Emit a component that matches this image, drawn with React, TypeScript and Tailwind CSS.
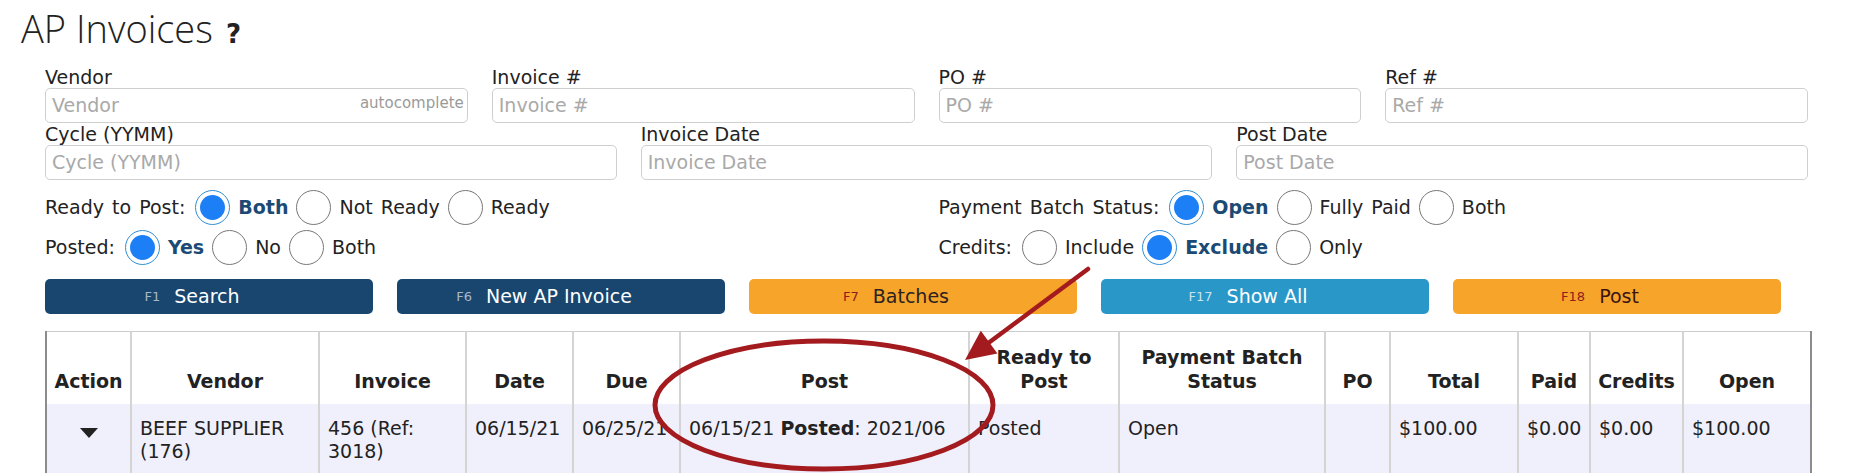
import React from 'react';

// Simple radio look-alike (large native style)
function Radio({ checked }: { checked?: boolean }) {
  if (checked) {
    return (
      <span className="flex h-[35px] w-[35px] shrink-0 items-center justify-center rounded-full border-[1.5px] border-[#2f8ed3] bg-white">
        <span className="h-[25px] w-[25px] rounded-full bg-[#1c7ff6]" />
      </span>
    );
  }
  return <span className="h-[35px] w-[35px] shrink-0 rounded-full border-[1.5px] border-[#7a7676] bg-white" />;
}

function RadioGroup({ label, options, selected }: { label: string; options: string[]; selected: number }) {
  return (
    <div className="flex h-[35px] items-center gap-2 [word-spacing:2px]">
      <span className="mr-[2px]">{label}</span>
      {options.map((opt, i) => (
        <React.Fragment key={opt}>
          <Radio checked={i === selected} />
          <span className={i === selected ? 'font-bold text-[#1b4a75]' : ''}>{opt}</span>
        </React.Fragment>
      ))}
    </div>
  );
}

function Field({ label, children }: { label: string; children?: React.ReactNode }) {
  return (
    <div className="flex flex-col">
      <span className="leading-[22px]">{label}</span>
      {children}
    </div>
  );
}

function TextBox({ placeholder, hint }: { placeholder: string; hint?: string }) {
  return (
    <div className="flex h-[35px] items-center justify-between rounded-[5px] border border-[#cfcfcf] bg-white pl-[6px] pr-[3px]">
      <span className="text-[#a9a9a9]">{placeholder}</span>
      {hint && <span className="-mt-[4px] text-[15px] text-[#9a9a9a]">{hint}</span>}
    </div>
  );
}

const buttons = [
  { key: 'F1', label: 'Search', cls: 'bg-[#18466f] text-white', keyCls: 'text-[#a9b8c8]' },
  { key: 'F6', label: 'New AP Invoice', cls: 'bg-[#18466f] text-white', keyCls: 'text-[#a9b8c8]' },
  { key: 'F7', label: 'Batches', cls: 'bg-[#f6a42a] text-[#2a2222]', keyCls: 'text-[#8e1d1d]' },
  { key: 'F17', label: 'Show All', cls: 'bg-[#2997c8] text-white', keyCls: 'text-[#c9e3f0]' },
  { key: 'F18', label: 'Post', cls: 'bg-[#f6a42a] text-[#3a1414]', keyCls: 'text-[#8e1d1d]' },
];

const columns = [
  { title: 'Action', w: 'w-[85px]' },
  { title: 'Vendor', w: 'w-[188px]' },
  { title: 'Invoice', w: 'w-[147px]' },
  { title: 'Date', w: 'w-[107px]' },
  { title: 'Due', w: 'w-[107px]' },
  { title: 'Post', w: 'w-[289px]' },
  { title: 'Ready to Post', w: 'w-[150px]' },
  { title: 'Payment Batch Status', w: 'w-[206px]' },
  { title: 'PO', w: 'w-[65px]' },
  { title: 'Total', w: 'w-[128px]' },
  { title: 'Paid', w: 'w-[72px]' },
  { title: 'Credits', w: 'w-[93px]' },
  { title: 'Open', w: 'w-[128px]' },
];

export default function App() {
  return (
    <div className="relative h-[473px] w-[1857px] overflow-hidden bg-white font-[family-name:'DejaVu_Sans',Verdana,sans-serif] text-[19px] text-[#222]">
      {/* Title */}
      <h1 className="ml-[21px] mt-[2px] h-[52px] leading-[52px] whitespace-nowrap">
        <span className="font-[family-name:'Open_Sans',sans-serif] text-[38px] font-light text-[#222]">AP Invoices</span>
        <span className="ml-[13px] text-[26px] font-bold">?</span>
      </h1>

      <div className="ml-[45px] w-[1763px]">
        {/* Filters */}
        <div className="mt-[12px] grid grid-cols-4 gap-x-6">
          <Field label="Vendor">
            <TextBox placeholder="Vendor" hint="autocomplete" />
          </Field>
          <Field label="Invoice #">
            <TextBox placeholder="Invoice #" />
          </Field>
          <Field label="PO #">
            <TextBox placeholder="PO #" />
          </Field>
          <Field label="Ref #">
            <TextBox placeholder="Ref #" />
          </Field>
        </div>
        <div className="grid grid-cols-3 gap-x-6">
          <Field label="Cycle (YYMM)">
            <TextBox placeholder="Cycle (YYMM)" />
          </Field>
          <Field label="Invoice Date">
            <TextBox placeholder="Invoice Date" />
          </Field>
          <Field label="Post Date">
            <TextBox placeholder="Post Date" />
          </Field>
        </div>

        <div className="mt-[10px] grid grid-cols-2 gap-x-6 gap-y-[5px]">
          <RadioGroup label="Ready to Post:" options={['Both', 'Not Ready', 'Ready']} selected={0} />
          <RadioGroup label="Payment Batch Status:" options={['Open', 'Fully Paid', 'Both']} selected={0} />
          <RadioGroup label="Posted:" options={['Yes', 'No', 'Both']} selected={0} />
          <RadioGroup label="Credits:" options={['Include', 'Exclude', 'Only']} selected={1} />
        </div>

        {/* Action buttons */}
        <div className="mt-[14px] grid grid-cols-[repeat(5,328px)] gap-x-6">
          {buttons.map(b => (
            <button key={b.key} className={`flex h-[35px] items-center justify-center gap-[14px] rounded-[5px] pr-[34px] ${b.cls}`}>
              <span className={`text-[13px] ${b.keyCls}`}>{b.key}</span>
              <span>{b.label}</span>
            </button>
          ))}
        </div>

        {/* Results */}
        <table className="mt-[17px] w-[1765px] table-fixed border-collapse border-t border-l-2 border-r-2 border-t-[#cccccc] border-l-[#8c8c8c] border-r-[#8c8c8c]">
          <colgroup>
            {columns.map(c => (
              <col key={c.title} className={c.w} />
            ))}
          </colgroup>
          <thead>
            <tr className="h-[72px]">
              {columns.map(c => (
                <th key={c.title} className="border-r-2 border-[#d6d3d3] px-1 pb-[11px] text-center align-bottom font-bold leading-[24px] last:border-r-0">
                  {c.title}
                </th>
              ))}
            </tr>
          </thead>
          <tbody>
            <tr className="bg-[#f0f0fc] align-top leading-[23px]">
              <td className="border-r-2 border-[#d6d3d3] pt-[24px]">
                <div className="mx-auto h-0 w-0 border-x-[9px] border-t-[10px] border-x-transparent border-t-[#222]" />
              </td>
              <td className="border-r-2 border-[#d6d3d3] px-2 pt-[13px] pb-[20px]">BEEF SUPPLIER (176)</td>
              <td className="border-r-2 border-[#d6d3d3] px-2 pt-[13px]">456 (Ref: 3018)</td>
              <td className="border-r-2 border-[#d6d3d3] px-2 pt-[13px]">06/15/21</td>
              <td className="border-r-2 border-[#d6d3d3] px-2 pt-[13px] whitespace-nowrap">06/25/21</td>
              <td className="border-r-2 border-[#d6d3d3] px-2 pt-[13px] whitespace-nowrap">
                06/15/21 <b>Posted</b>: 2021/06
              </td>
              <td className="border-r-2 border-[#d6d3d3] px-2 pt-[13px]">Posted</td>
              <td className="border-r-2 border-[#d6d3d3] px-2 pt-[13px]">Open</td>
              <td className="border-r-2 border-[#d6d3d3] px-2 pt-[13px]"></td>
              <td className="border-r-2 border-[#d6d3d3] px-2 pt-[13px]">$100.00</td>
              <td className="border-r-2 border-[#d6d3d3] px-2 pt-[13px]">$0.00</td>
              <td className="border-r-2 border-[#d6d3d3] px-2 pt-[13px]">$0.00</td>
              <td className="px-2 pt-[13px]">$100.00</td>
            </tr>
          </tbody>
        </table>
      </div>

      {/* Red annotation drawn over the page */}
      <svg className="pointer-events-none absolute left-0 top-0" width="1857" height="473" viewBox="0 0 1857 473">
        <ellipse cx="824" cy="405" rx="169" ry="64" fill="none" stroke="#a31b1e" strokeWidth="5" />
        <line x1="1088" y1="269" x2="987" y2="344" stroke="#a31b1e" strokeWidth="4.5" strokeLinecap="round" />
        <polygon points="965,360 980.8,330.8 997.4,353.4" fill="#a31b1e" />
      </svg>
    </div>
  );
}
